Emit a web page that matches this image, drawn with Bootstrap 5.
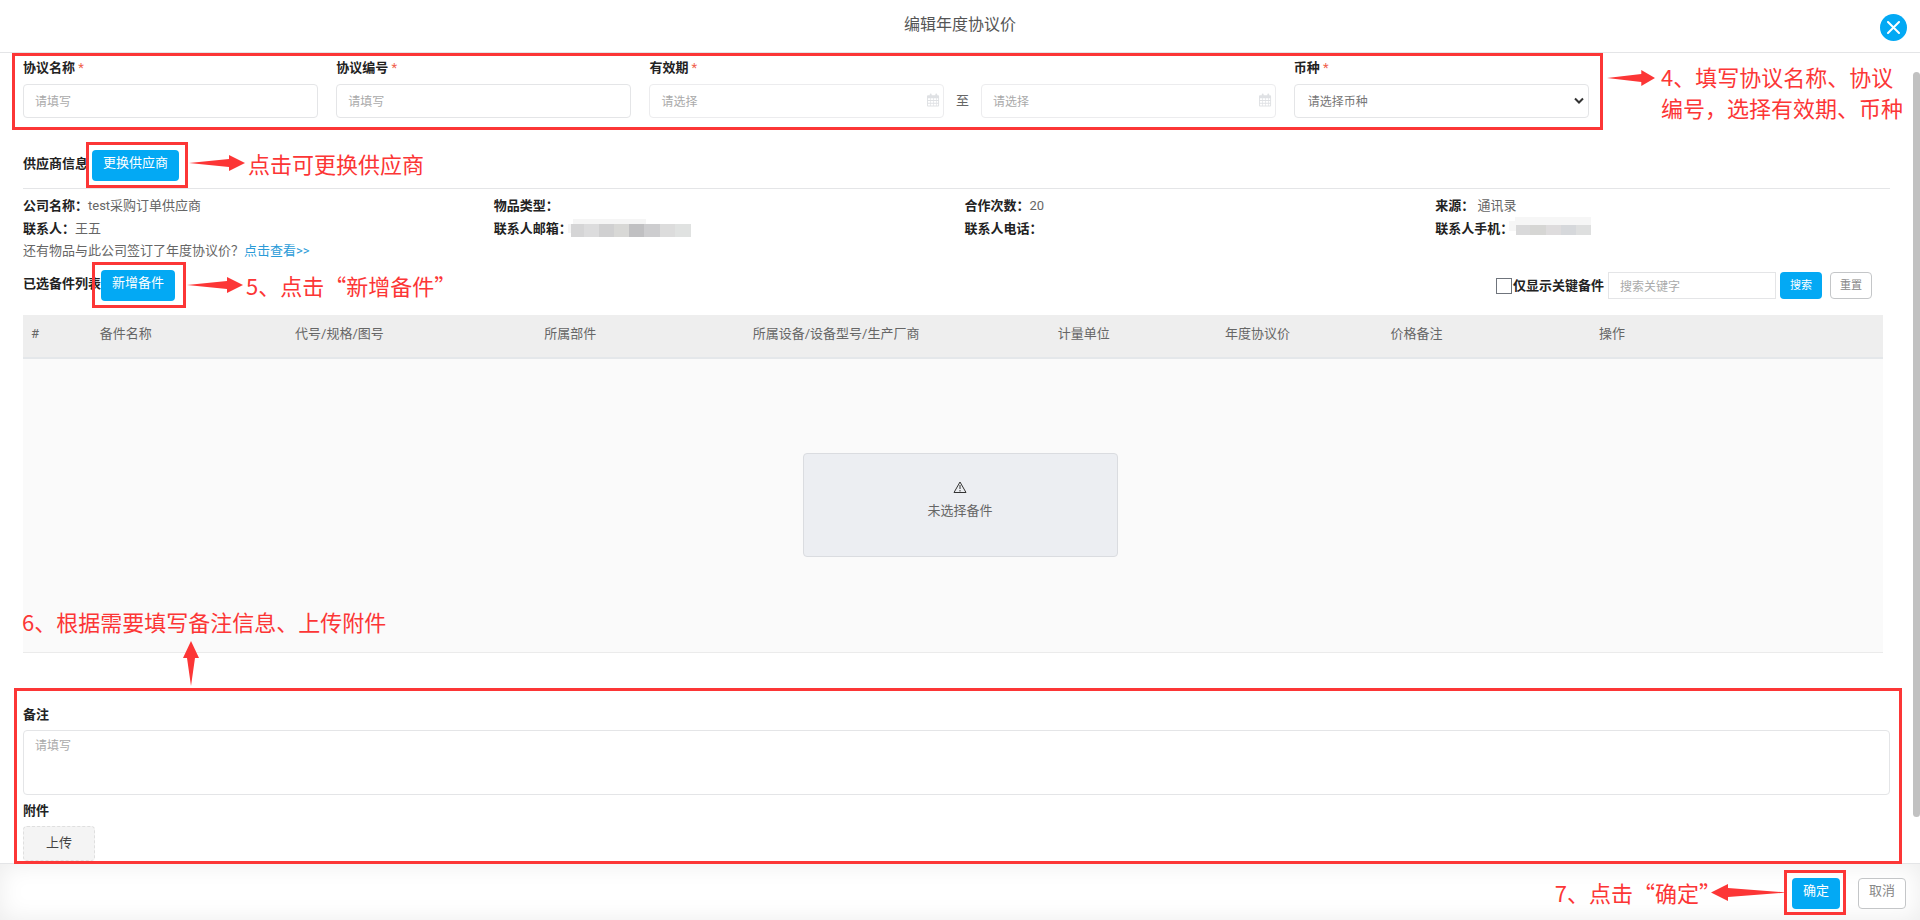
<!DOCTYPE html>
<html lang="zh-CN">
<head>
<meta charset="utf-8">
<meta name="viewport" content="width=device-width, initial-scale=1">
<title>编辑年度协议价</title>
<link href="https://cdn.jsdelivr.net/npm/bootstrap@5.3.0/dist/css/bootstrap.min.css" rel="stylesheet">
<style>
  :root { --accent: #03a9f4; --note: #fc3636; --line: #e4e5e7; }
  body { font-family: Roboto, "Noto Sans CJK SC", sans-serif; font-size: 13px; line-height: 20px; color: #666; }
  .ink, .field-label { color: #222; font-weight: 700; }
  .star { color: #f0624d; font-weight: 400; }
  a { color: #2a9bd8; text-decoration: none; }

  .page-head { height: 53px; border-bottom: 1px solid var(--line); }
  .page-head h1 { font-size: 16px; line-height: 24px; font-weight: 400; color: #555; margin: 0; padding-top: 13px; }
  .close-btn { top: 14px; right: 13px; width: 27px; height: 27px; border: 0; background: var(--accent); }

  .page-body { padding: 5px 30px 0 23px; }
  .terms-aside { flex: 0 0 301px; }
  .terms { display: grid; grid-template-columns: 295fr 295fr 626fr 295fr; column-gap: 18px; }
  .field-label { display: block; margin-bottom: 6px; }
  .box { height: 34px; border: 1px solid var(--line); border-radius: 4px; font-size: 12px; padding: 7px 11px 5px; color: #777; }
  .box::placeholder { color: #aaa; opacity: 1; }
  .date .box { border-color: #ececee; }
  .date svg { right: 4px; top: 9px; }
  select.box { padding: 7px 13px 5px; background: #fff; appearance: none; width: 100%; }
  .chev { right: 5px; top: 13px; pointer-events: none; }

  .act { border: 0; background: var(--accent); color: #fff; font-size: 13px; line-height: 20px; border-radius: 4px; padding: 3px 11px 8px; display: block; }
  .act-plain { border: 1px solid #c4c6c8; background: #fff; color: #888; padding: 2px 10px 7px; }
  .act-sm { font-size: 11px; line-height: 20px; padding: 4px 10px 3px; }
  .act-plain.act-sm { padding: 3px 9px 2px; }

  .supplier-head { margin-top: 32px; padding-bottom: 7px; border-bottom: 1px solid var(--line); }
  .info { padding-top: 5px; --bs-gutter-x: 16px; line-height: 23px; }
  .info .hint { line-height: 22px; }
  .mosaic { margin: 2px 0 0 -4px; }
  .list-head { margin-top: 8px; padding-right: 18px; height: 31px; }
  .key-check { width: 16px; height: 16px; margin: 0 1px 0 0; appearance: none; border: 1px solid #6f747c; background: #fff; }
  .search-bar { padding-top: 2px; }
  .search { width: 168px; height: 27px; border: 1px solid var(--line); border-radius: 0; font-size: 12px; padding: 3px 11px 1px; }
  .search::placeholder { color: #aaa; }

  .parts { margin-top: 14px; padding-right: 7px; }
  .parts table { table-layout: fixed; width: 100%; }
  .parts th { background: #eee; font-weight: 400; padding: 9px 8px 13px; border-bottom: 2px solid #e4e7ea; white-space: nowrap; }
  .parts td { background: #fafafa; height: 294px; padding-left: 15px; border-bottom: 1px solid #ebebeb; }
  .c-no { width: 3.7%; } .c-name { width: 10.5%; } .c-code { width: 13.4%; } .c-part { width: 11.2%; }
  .c-dev { width: 16.4%; } .c-unit { width: 9%; } .c-price { width: 8.9%; } .c-memo { width: 11.2%; }
  .empty { width: 315px; height: 104px; padding-top: 27px; background: #eceef2; border: 1px solid #dadce0; border-radius: 4px; }

  .extra { margin-top: 52px; }
  .extra .field-label { margin-bottom: 5px; }
  textarea.box { height: 65px; min-height: 65px; resize: none; padding: 6px 11px; margin-bottom: 6px; display: block; }
  .upload { background: #f4f4f4; border: 1px dashed #dfdfdf; border-radius: 4px; padding: 6px 22px 7px; color: #444; display: block; }

  .page-foot { height: 57px; padding: 14px 14px 0 0; border-top: 1px solid var(--line); box-shadow: inset 0 0 24px rgba(0,0,0,.08); gap: 18px; }
  .scroll-thumb { right: 0; top: 72px; bottom: 103px; width: 7px; border-radius: 4px; background: #c1c1c1; }

  /* tutorial marks */
  .frame { position: absolute; border: 3px solid var(--note); pointer-events: none; z-index: 2; }
  .frame svg { flex: none; fill: var(--note); }
  .callout { position: absolute; display: flex; color: var(--note); font: 400 22px/31px "Noto Sans CJK SC", sans-serif; white-space: nowrap; }
  .callout-side { left: calc(100% + 4px); top: 0; bottom: 0; align-items: center; gap: 3px; }
  .f-terms { inset: -5px -14px -12px -11px; }
  .f-terms .callout { left: calc(100% + 7px); top: 5px; gap: 6px; }
  .f-terms svg { margin-top: 9px; }
  .f-change { inset: -8px -9px -7px -6px; }
  .f-change .callout { bottom: 4px; }
  .f-add { inset: -8px -11px -7px -9px; }
  .f-extra { inset: -17px -12px -3px -9px; }
  .f-extra .callout { left: 5px; bottom: calc(100% + 5px); flex-direction: column; gap: 4px; }
  .f-extra svg { margin-left: 161px; }
  .f-ok { inset: -8px -6px -6px -8px; }
  .f-ok .callout { right: 100%; top: 0; bottom: 0; align-items: center; }
  .f-ok svg { margin-left: -10px; }
</style>
</head>
<body class="d-flex flex-column min-vh-100 bg-white">
<svg class="d-none">
  <symbol id="cal" viewBox="0 0 14 14"><path fill="#dfe1e4" d="M1 2h2V1q0-1 1-1t1 1v1h4V1q0-1 1-1t1 1v1h1q1 0 1 1v10q0 1-1 1H1q-1 0-1-1V3q0-1 1-1z"/><path fill="#fff" d="M1 5h2.300v2H1zm3 0h2.500v2H4zm3.200 0h2.500v2H7.200zm3.200 0H12v2h-1.600zM1 8h2.300v2H1zm3 0h2.500v2H4zm3.200 0h2.500v2H7.200zm3.200 0H12v2h-1.600zM1 11h2.300v2H1zm3 0h2.500v2H4zm3.200 0h2.500v2H7.200zm3.200 0H12v2h-1.600z"/></symbol>
  <symbol id="arrow" viewBox="0 0 56 16" preserveAspectRatio="none"><path d="M0 8L40 4V0l16 8-16 8v-4z"/></symbol>
</svg>

<header class="page-head position-relative text-center">
  <h1>编辑年度协议价</h1>
  <button type="button" class="close-btn position-absolute rounded-circle p-0 d-flex align-items-center justify-content-center" aria-label="关闭">
    <svg width="13" height="13" viewBox="0 0 13 13"><path d="M1 1l11 11M12 1L1 12" stroke="#fff" stroke-width="2" stroke-linecap="round"/></svg>
  </button>
</header>

<main class="page-body flex-grow-1">
  <div class="d-flex">
    <div class="terms position-relative flex-grow-1">
      <div>
        <label class="field-label" for="name">协议名称 <span class="star">*</span></label>
        <input class="box form-control" id="name" placeholder="请填写">
      </div>
      <div>
        <label class="field-label" for="code">协议编号 <span class="star">*</span></label>
        <input class="box form-control" id="code" placeholder="请填写">
      </div>
      <div>
        <label class="field-label" for="from">有效期 <span class="star">*</span></label>
        <div class="d-flex align-items-center">
          <div class="date position-relative flex-fill">
            <input class="box form-control" id="from" placeholder="请选择">
            <svg class="position-absolute" width="13" height="14"><use href="#cal"/></svg>
          </div>
          <label class="px-2 mx-1 text-center" for="to">至</label>
          <div class="date position-relative flex-fill">
            <input class="box form-control" id="to" placeholder="请选择">
            <svg class="position-absolute" width="13" height="14"><use href="#cal"/></svg>
          </div>
        </div>
      </div>
      <div>
        <label class="field-label" for="currency">币种 <span class="star">*</span></label>
        <div class="position-relative">
          <select class="box d-block" id="currency"><option>请选择币种</option></select>
          <svg class="chev position-absolute" width="10" height="8" viewBox="0 0 10 8"><path d="M1 1.500l4 4 4-4" fill="none" stroke="#333" stroke-width="2"/></svg>
        </div>
      </div>
      <div class="frame f-terms">
        <div class="callout"><svg width="48" height="16"><use href="#arrow"/></svg><span>4、填写协议名称、协议<br>编号，选择有效期、币种</span></div>
      </div>
    </div>
    <div class="terms-aside"></div>
  </div>

  <section class="supplier-head d-flex align-items-center">
    <span class="ink pb-1">供应商信息</span>
    <div class="position-relative ms-1">
      <button type="button" class="act">更换供应商</button>
      <div class="frame f-change">
        <div class="callout callout-side"><svg width="56" height="16"><use href="#arrow"/></svg><span>点击可更换供应商</span></div>
      </div>
    </div>
  </section>

  <section class="row info">
    <div class="col-3"><span class="ink">公司名称：</span>test采购订单供应商</div>
    <div class="col-3"><span class="ink">物品类型：</span></div>
    <div class="col-3"><span class="ink">合作次数：</span>20</div>
    <div class="col-3"><span class="ink">来源：</span> 通讯录</div>
    <div class="col-3"><span class="ink">联系人：</span>王五</div>
    <div class="col-3 d-flex"><span class="ink">联系人邮箱：</span>
      <svg class="mosaic" width="123" height="20" viewBox="0 0 123 20" shape-rendering="crispEdges"><path fill="#f5f5f5" d="M5 0h73v8H5zM0 5h6v9H0z"/><path fill="#d5d5d6" d="M3 5h13v13H3z"/><path fill="#dcdcdd" d="M16 5h15v13H16z"/><path fill="#d0d0d1" d="M31 5h15v13H31z"/><path fill="#d8d8d6" d="M46 5h15v13H46z"/><path fill="#c0c0c2" d="M61 5h15v13H61z"/><path fill="#cdcdcf" d="M76 5h16v13H76z"/><path fill="#dcdcdc" d="M92 5h15v13H92z"/><path fill="#e0e2e1" d="M107 5h16v13h-16z"/></svg>
    </div>
    <div class="col-3"><span class="ink">联系人电话：</span></div>
    <div class="col-3 d-flex"><span class="ink">联系人手机：</span>
      <svg class="mosaic mt-0" width="82" height="20" viewBox="0 0 82 20" shape-rendering="crispEdges"><path fill="#f6f6f6" d="M6 0h76v9H6zM0 4h8v10H0z"/><path fill="#d9d9da" d="M7 8h14v10H7z"/><path fill="#d6d6d4" d="M21 8h16v10H21z"/><path fill="#dedcdd" d="M37 8h15v10H37z"/><path fill="#d6d8db" d="M52 8h15v10H52z"/><path fill="#dedfdf" d="M67 8h15v10H67z"/></svg>
    </div>
    <div class="col-12 hint">还有物品与此公司签订了年度协议价？<a href="#parts">点击查看&gt;&gt;</a></div>
  </section>

  <section class="list-head d-flex align-items-start">
    <span class="ink pt-1">已选备件列表</span>
    <div class="position-relative">
      <button type="button" class="act">新增备件</button>
      <div class="frame f-add">
        <div class="callout callout-side"><svg width="56" height="16"><use href="#arrow"/></svg><span>5、点击“新增备件”</span></div>
      </div>
    </div>
    <div class="search-bar d-flex align-items-center ms-auto">
      <input type="checkbox" class="key-check" id="key"><label class="ink me-1" for="key">仅显示关键备件</label>
      <input class="search form-control" placeholder="搜索关键字" aria-label="搜索关键字">
      <button type="button" class="act act-sm ms-1">搜索</button>
      <button type="button" class="act act-plain act-sm ms-2">重置</button>
    </div>
  </section>

  <section class="parts" id="parts">
    <table>
      <colgroup><col class="c-no"><col class="c-name"><col class="c-code"><col class="c-part"><col class="c-dev"><col class="c-unit"><col class="c-price"><col class="c-memo"><col></colgroup>
      <thead><tr><th>#</th><th>备件名称</th><th>代号/规格/图号</th><th>所属部件</th><th>所属设备/设备型号/生产厂商</th><th>计量单位</th><th>年度协议价</th><th>价格备注</th><th>操作</th></tr></thead>
      <tbody><tr><td colspan="9">
        <div class="empty mx-auto text-center">
          <svg class="d-block mx-auto mb-2" width="14" height="12" viewBox="0 0 14 12"><path d="M7 1l6 10.500H1z" fill="none" stroke="#333" stroke-linejoin="round"/><path d="M7 4v4M7 9v1.500" stroke="#333"/></svg>
          未选择备件
        </div>
      </td></tr></tbody>
    </table>
  </section>

  <section class="extra position-relative">
    <label class="field-label" for="memo">备注</label>
    <textarea class="box form-control" id="memo" placeholder="请填写"></textarea>
    <label class="field-label" for="upload">附件</label>
    <button type="button" class="upload" id="upload">上传</button>
    <div class="frame f-extra">
      <div class="callout"><span>6、根据需要填写备注信息、上传附件</span><svg width="16" height="45" viewBox="0 0 16 45"><path d="M8 0l8 17h-4L8 45 4 17H0z"/></svg></div>
    </div>
  </section>
</main>

<footer class="page-foot d-flex justify-content-end align-items-start">
  <div class="position-relative">
    <button type="button" class="act">确定</button>
    <div class="frame f-ok">
      <div class="callout"><span>7、点击“确定”</span><svg width="76" height="17" viewBox="0 0 76 17"><path d="M76 8.500L17 4V0L0 8.500 17 17v-4z"/></svg></div>
    </div>
  </div>
  <button type="button" class="act act-plain">取消</button>
</footer>
<div class="scroll-thumb position-absolute"></div>
<script src="https://cdn.jsdelivr.net/npm/bootstrap@5.3.0/dist/js/bootstrap.bundle.min.js"></script>
</body>
</html>
